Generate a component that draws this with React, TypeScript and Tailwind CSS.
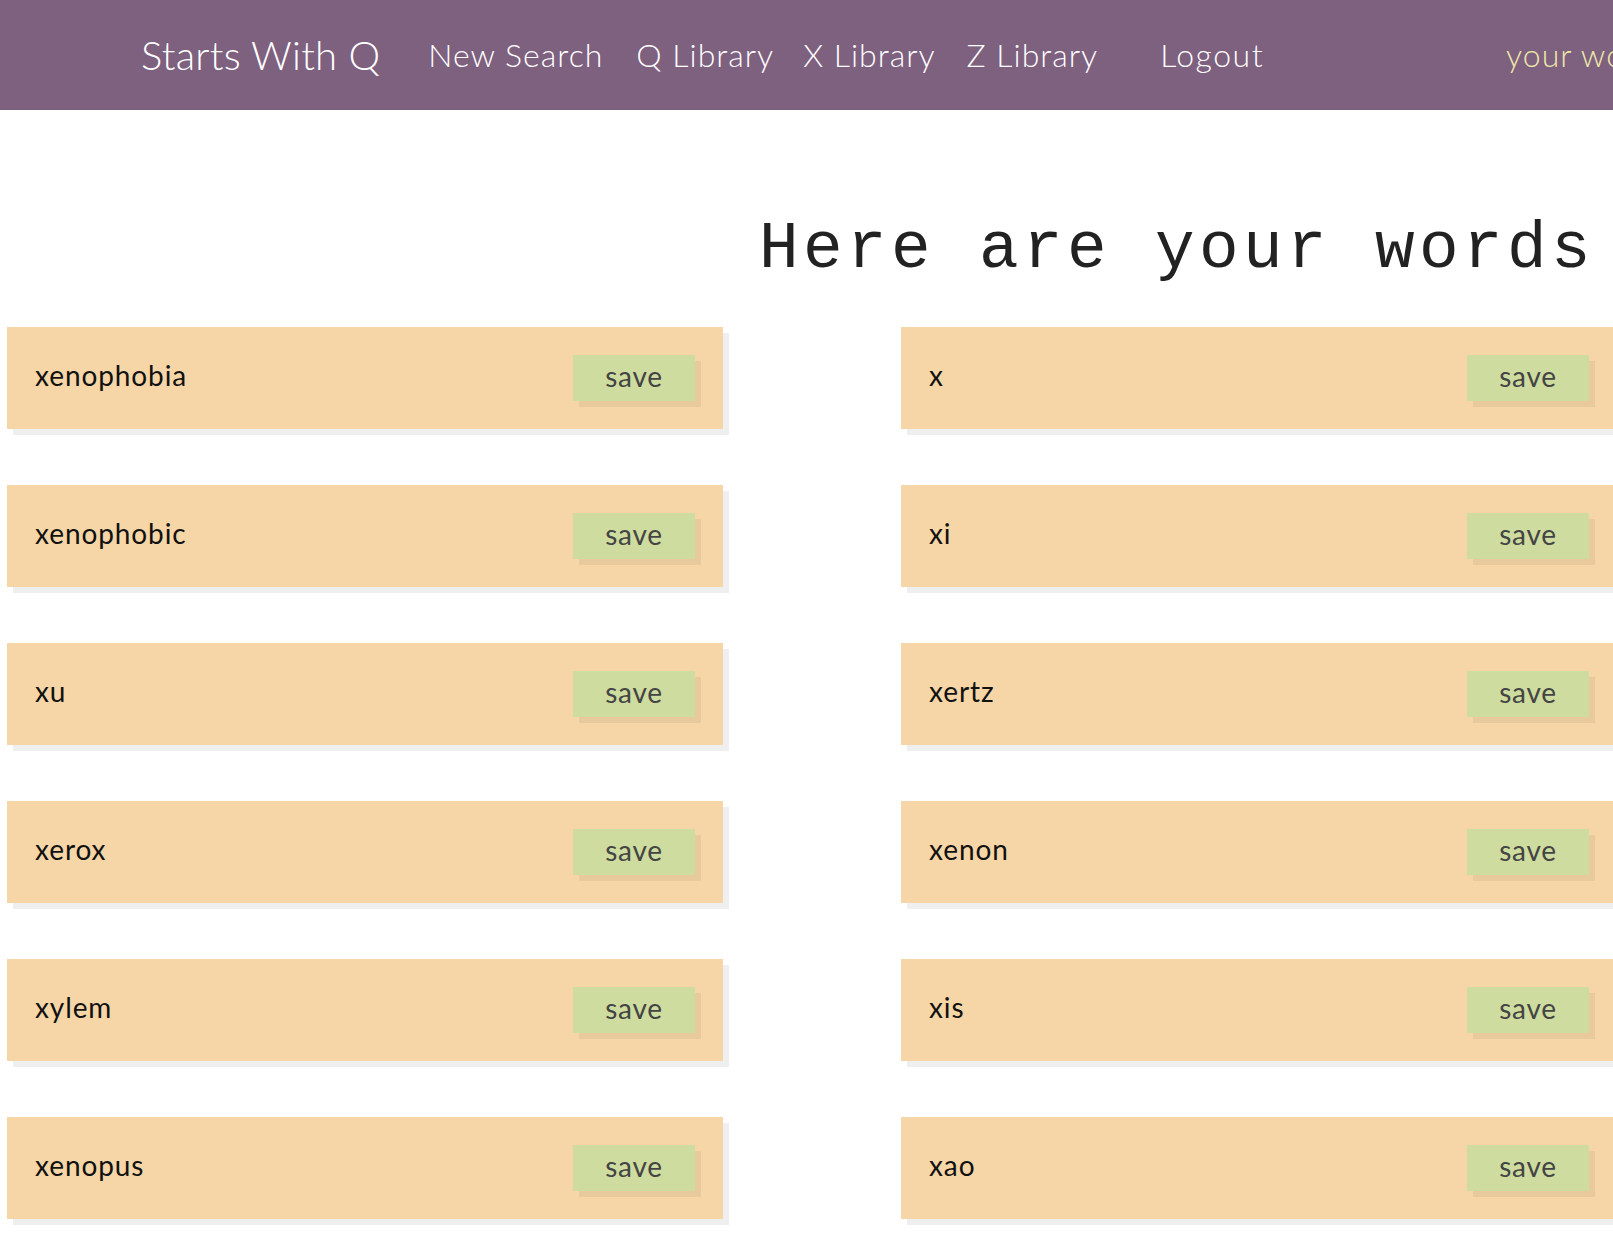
const words = [
  "xenophobia",
  "x",
  "xenophobic",
  "xi",
  "xu",
  "xertz",
  "xerox",
  "xenon",
  "xylem",
  "xis",
  "xenopus",
  "xao",
];

function WordCard({ word }: { word: string }) {
  return (
    <div className="flex h-[102px] items-center justify-between bg-[#f6d6a6] px-[28px] shadow-[6px_6px_0_#efefef]">
      <span className="pb-[6px] text-[28px] font-normal tracking-[0.9px] text-[#111]">{word}</span>
      <button className="h-[46px] w-[122px] bg-[#cfdc9f] pb-[5px] text-[28px] font-normal tracking-[0.7px] text-[#444] shadow-[6px_6px_0_#e9ca9c]">
        save
      </button>
    </div>
  );
}

export default function App() {
  return (
    <div className="min-h-screen w-full overflow-hidden bg-white font-['Lato',sans-serif] font-light">
      {/* Nav */}
      <nav className="flex h-[110px] items-center whitespace-nowrap bg-[#7e607f] pl-[141px] text-white">
        <a className="text-[40px] tracking-[0.25px]">Starts With Q</a>
        <a className="ml-[48px] text-[32px] tracking-[1px]">New Search</a>
        <a className="ml-[33px] text-[32px] tracking-[1px]">Q Library</a>
        <a className="ml-[29px] text-[32px] tracking-[1px]">X Library</a>
        <a className="ml-[31px] text-[32px] tracking-[1px]">Z Library</a>
        <a className="ml-[62px] text-[32px] tracking-[1.5px]">Logout</a>
        <span className="ml-[242px] text-[32px] tracking-[1px] text-[#eee8aa]">your words</span>
      </nav>

      {/* Heading */}
      <h1 className="ml-[759px] mt-[107px] whitespace-nowrap font-['Liberation_Mono',monospace] text-[66px] font-normal leading-none tracking-[4.4px] text-[#222]">
        Here are your words
      </h1>

      {/* Word list */}
      <div className="mt-[44px] grid grid-cols-[716px_716px] gap-x-[178px] gap-y-[56px] pl-[7px] pb-10">
        {words.map((w) => (
          <WordCard key={w} word={w} />
        ))}
      </div>
    </div>
  );
}
